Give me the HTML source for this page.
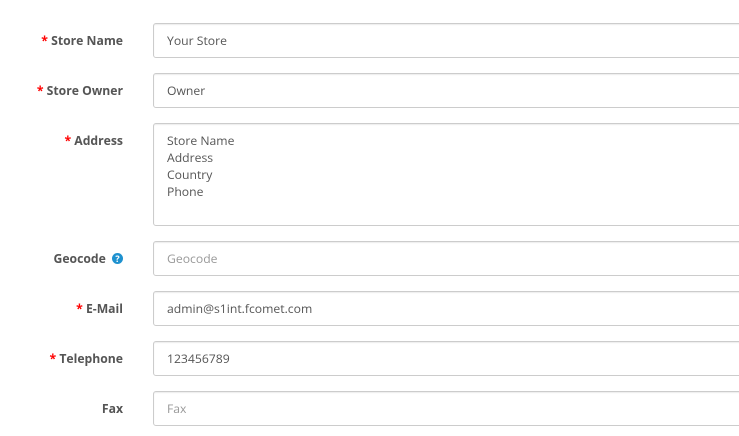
<!DOCTYPE html>
<html><head><style>
body{margin:0;width:739px;height:436px;overflow:hidden;background:#fff;font-family:"Open Sans","Liberation Sans",sans-serif;font-size:12px;}
.lbl{position:absolute;right:616px;font-weight:bold;color:#555;font-size:12.2px;white-space:nowrap;}
.lbl .r{color:#f00;}
.in{position:absolute;left:153px;width:600px;height:33px;border:1px solid #ccc;border-radius:3px;box-shadow:inset 0 1px 1px rgba(0,0,0,.075);box-sizing:content-box;color:#555;font-size:12.2px;}
.in span{position:absolute;left:13px;top:8px;}
.ph{color:#999;}
.q{display:inline-block;width:11px;height:11px;border-radius:50%;background:#1e91cf;color:#fff;font-size:9px;line-height:11px;text-align:center;vertical-align:1px;margin-left:3px;}
</style></head><body>
<div class="lbl" style="top:32px"><span class="r">*</span> Store Name</div>
<div class="in" style="top:23px"><span>Your Store</span></div>
<div class="lbl" style="top:82px"><span class="r">*</span> Store Owner</div>
<div class="in" style="top:73px"><span>Owner</span></div>
<div class="lbl" style="top:132px"><span class="r">*</span> Address</div>
<div class="in" style="top:123px;height:101px"><span style="line-height:17px;top:8px">Store Name<br>Address<br>Country<br>Phone</span></div>
<div class="lbl" style="top:250px">Geocode <span class="q">?</span></div>
<div class="in" style="top:241px"><span class="ph">Geocode</span></div>
<div class="lbl" style="top:300px"><span class="r">*</span> E-Mail</div>
<div class="in" style="top:291px"><span>admin@s1int.fcomet.com</span></div>
<div class="lbl" style="top:350px"><span class="r">*</span> Telephone</div>
<div class="in" style="top:341px"><span>123456789</span></div>
<div class="lbl" style="top:400px">Fax</div>
<div class="in" style="top:391px"><span class="ph">Fax</span></div>
</body></html>
